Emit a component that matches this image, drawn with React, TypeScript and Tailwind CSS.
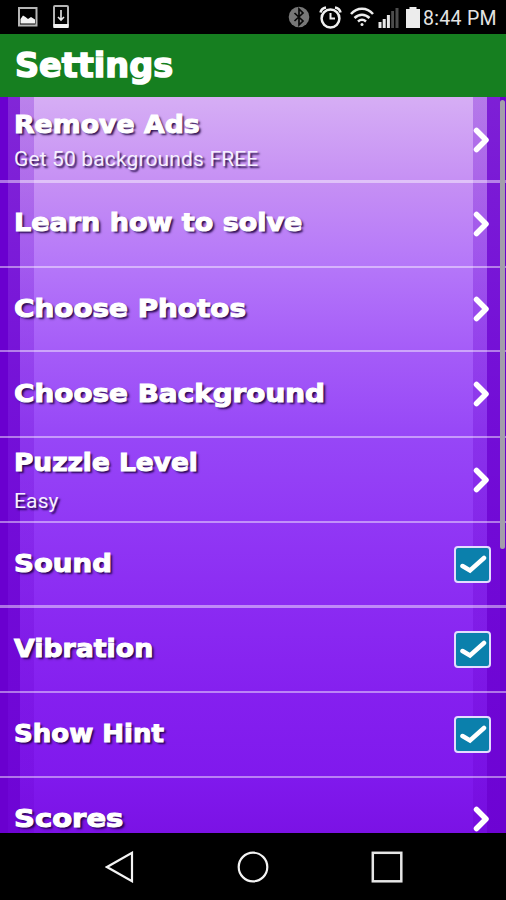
import clsx from 'clsx';

type Item = {
	label: string;
	detail?: string;
	control: 'link' | 'check';
	row: string;
	stretch: string;
};

const items: Item[] = [
	{ label: 'Remove Ads', detail: 'Get 50 backgrounds FREE', control: 'link', row: 'h-[86px] border-b-[3px] pt-3', stretch: 'scale-x-[1.115]' },
	{ label: 'Learn how to solve', control: 'link', row: 'h-[85px] border-b-2 pt-6', stretch: 'scale-x-[1.125]' },
	{ label: 'Choose Photos', control: 'link', row: 'h-[84px] border-b-2 pt-[25px]', stretch: 'scale-x-[1.16]' },
	{ label: 'Choose Background', control: 'link', row: 'h-[86px] border-b-2 pt-[26px]', stretch: 'scale-x-[1.16]' },
	{ label: 'Puzzle Level', detail: 'Easy', control: 'link', row: 'h-[85px] border-b-2 pt-[9px]', stretch: 'scale-x-[1.1]' },
	{ label: 'Sound', control: 'check', row: 'h-[85px] border-b-[3px] pt-[25px]', stretch: 'scale-x-[1.15]' },
	{ label: 'Vibration', control: 'check', row: 'h-[85px] border-b-2 pt-[25px]', stretch: 'scale-x-[1.115]' },
	{ label: 'Show Hint', control: 'check', row: 'h-[85px] border-b-2 pt-[25px]', stretch: 'scale-x-[1.085]' },
	{ label: 'Scores', control: 'link', row: 'h-[85px] border-b-2 pt-[25px]', stretch: 'scale-x-[1.21]' },
];

function StatusBar() {
	return (
		<div className="flex h-[34px] items-center bg-black pl-[18px] pr-2">
			{/* Notifications */}
			<svg className="h-5 w-5" viewBox="0 0 20 20" fill="none">
				<rect x="1" y="1" width="17.5" height="17.5" stroke="#b5b5b5" strokeWidth="2" />
				<path d="M2.500 16.500V12L5 8.500L7.500 10L10 12L13 10L17 12.500V16.500Z" fill="#f2f2f2" />
			</svg>
			<svg className="ml-[15px] h-6 w-4" viewBox="0 0 16 24" fill="none">
				<rect x="1" y="1" width="14" height="21" rx="1" stroke="#b5b5b5" strokeWidth="2" />
				<path d="M0.500 19H15.500V23H0.500Z" fill="#f2f2f2" />
				<path d="M8 5V15M5 12L8 15L11 12" stroke="#e8e8e8" strokeWidth="1.600" />
			</svg>

			<div className="ml-auto flex items-center">
				<svg className="h-[22px] w-[22px]" viewBox="0 0 22 22" fill="none">
					<circle cx="11" cy="11" r="10.300" fill="#777" />
					<path d="M6.500 7L15 15L11 19V3L15 7L6.500 15" stroke="#080808" strokeWidth="1.700" />
				</svg>
				<svg className="ml-[9px] h-6 w-[23px]" viewBox="0 0 23 24" fill="none" stroke="#f0f0f0">
					<circle cx="11.500" cy="13.500" r="8.900" strokeWidth="2.500" />
					<path d="M11.500 8V13.500H16" strokeWidth="2" />
					<path d="M1.500 7.500C2 5 4 3 7 2.500M16 2.500C19 3 21 5 21.500 7.500" strokeWidth="2.600" />
				</svg>
				<svg className="ml-2 h-5 w-6" viewBox="0 0 24 20" fill="none" stroke="#ededed" strokeWidth="2.500">
					<path d="M1 7C7 0 17 0 23 7" />
					<path d="M4.500 11C9 6.500 15 6.500 19.500 11" />
					<path d="M8 14.500C10.500 12.300 13.500 12.300 16 14.500" />
					<circle cx="12" cy="17.600" r="1.500" fill="#ededed" stroke="none" />
				</svg>
				<svg className="ml-1 h-[21px] w-[22px]" viewBox="0 0 22 21">
					<path d="M0.500 15H3.500V21H0.500ZM4.700 12H7.700V21H4.700ZM8.900 8H11.900V21H8.900Z" fill="#e8e8e8" />
					<path d="M13.200 4H16V21H13.200ZM17.500 1H20.500V21H17.500Z" fill="#4c4c4c" />
				</svg>
				<svg className="ml-[6px] h-[21px] w-[14px]" viewBox="0 0 14 21" fill="#ececec">
					<path d="M3.500 0H10.500V2H14V21H0V2H3.500Z" />
				</svg>
				<span className="ml-[3px] mt-1 w-[75px] whitespace-nowrap font-[Roboto,sans-serif] text-[19.5px] leading-6 tracking-[0.3px] text-[#e4e4e4]">8:44 PM</span>
			</div>
		</div>
	);
}

function Chevron() {
	return (
		<svg className="mr-[15px] h-7 w-[19px]" viewBox="0 0 19 28" fill="none" stroke="#fff" strokeWidth="5.500" strokeLinecap="round" strokeLinejoin="round">
			<path d="M4.500 4.500L14 14L4.500 23.500" />
		</svg>
	);
}

function CheckBox() {
	return (
		<div className="mr-[15px] flex h-[37px] w-[37px] items-center justify-center rounded-[4px] border-2 border-[#e4dcff] bg-[#0b80ac]">
			<svg className="h-6 w-7" viewBox="0 0 28 24" fill="none" stroke="#fff" strokeWidth="4.500" strokeLinecap="round">
				<path d="M3.500 13L11 17.500L25 5" />
			</svg>
		</div>
	);
}

function Row({ item }: { item: Item }) {
	return (
		<div className={clsx('flex shrink-0 justify-between border-white/45 pl-[14px]', item.row)}>
			<div className="[text-shadow:2px_2px_2px_rgba(25,0,60,0.9)]">
				<div className={clsx("w-fit origin-left whitespace-nowrap font-['DejaVu_Sans',sans-serif] text-[24px] font-bold leading-8 text-white [-webkit-text-stroke:1px_#fff]", item.stretch)}>
					{item.label}
				</div>
				{item.detail && (
					<div className={clsx('whitespace-nowrap font-[Roboto,sans-serif] text-[21px] leading-6 tracking-[0.14px] text-[#f6efff]', item.detail === 'Easy' ? 'mt-[10px]' : 'mt-[6px]')}>
						{item.detail}
					</div>
				)}
			</div>
			<div className={clsx(
				item.control === 'check' && '-mt-[2px]',
				item.label === 'Remove Ads' && 'pt-[17px]',
				item.label === 'Puzzle Level' && 'pt-[19px]',
				item.label === 'Learn how to solve' && 'pt-[3px]',
				item.label === 'Choose Photos' && 'pt-[2px]',
				item.label === 'Choose Background' && 'pt-[2px]',
				item.label === 'Scores' && 'pt-[2px]',
			)}>
				{item.control === 'check' ? <CheckBox /> : <Chevron />}
			</div>
		</div>
	);
}

// striped side curtains over a vertical fade
const backdrop =
	'bg-[linear-gradient(90deg,#6a00cf_8px,rgba(106,0,207,.78)_8px_20px,rgba(106,0,207,.25)_20px_34px,transparent_34px_473px,rgba(106,0,207,.3)_473px_487px,rgba(106,0,207,.82)_487px_500px,#6a00cf_500px),linear-gradient(180deg,#d6aef5_0,#c690f4_84px,#b577f9_168px,#a55cf8_254px,#9747f7_338px,#9138f5_424px,#8b2bf2_508px,#8520ef_594px,#8019ed_680px,#7b12e5_736px)]';

export default function App() {
	return (
		<div className="flex h-[900px] w-[506px] flex-col overflow-hidden bg-black">
			<StatusBar />
			<header className="flex h-[63px] shrink-0 items-center bg-[#167f20] pl-[15px]">
				<h1 className="origin-left scale-x-[1.015] font-['DejaVu_Sans',sans-serif] text-[33px] font-bold leading-10 text-white [-webkit-text-stroke:1.5px_#fff]">Settings</h1>
			</header>

			<main className={clsx('relative flex h-[736px] shrink-0 flex-col overflow-hidden', backdrop)}>
				{items.map((item) => (
					<Row key={item.label} item={item} />
				))}
				<div className="absolute right-px top-[3px] h-[449px] w-[5px] rounded-sm bg-[#a39eaa]" />
			</main>

			<nav className="flex h-[67px] shrink-0 items-center bg-black pl-[105px]">
				<svg className="h-8 w-[30px]" viewBox="0 0 30 32" fill="none" stroke="#f4f4f4" strokeWidth="2.200">
					<path d="M2 16L27 1.800V30.200Z" />
				</svg>
				<svg className="ml-[102px] h-8 w-8" viewBox="0 0 32 32" fill="none" stroke="#f4f4f4" strokeWidth="2.200">
					<circle cx="16" cy="16" r="14.300" />
				</svg>
				<svg className="ml-[102px] h-8 w-8" viewBox="0 0 32 32" fill="none" stroke="#e6e6e6" strokeWidth="2.500">
					<rect x="1.800" y="1.800" width="28.500" height="28.500" />
				</svg>
			</nav>
		</div>
	);
}
